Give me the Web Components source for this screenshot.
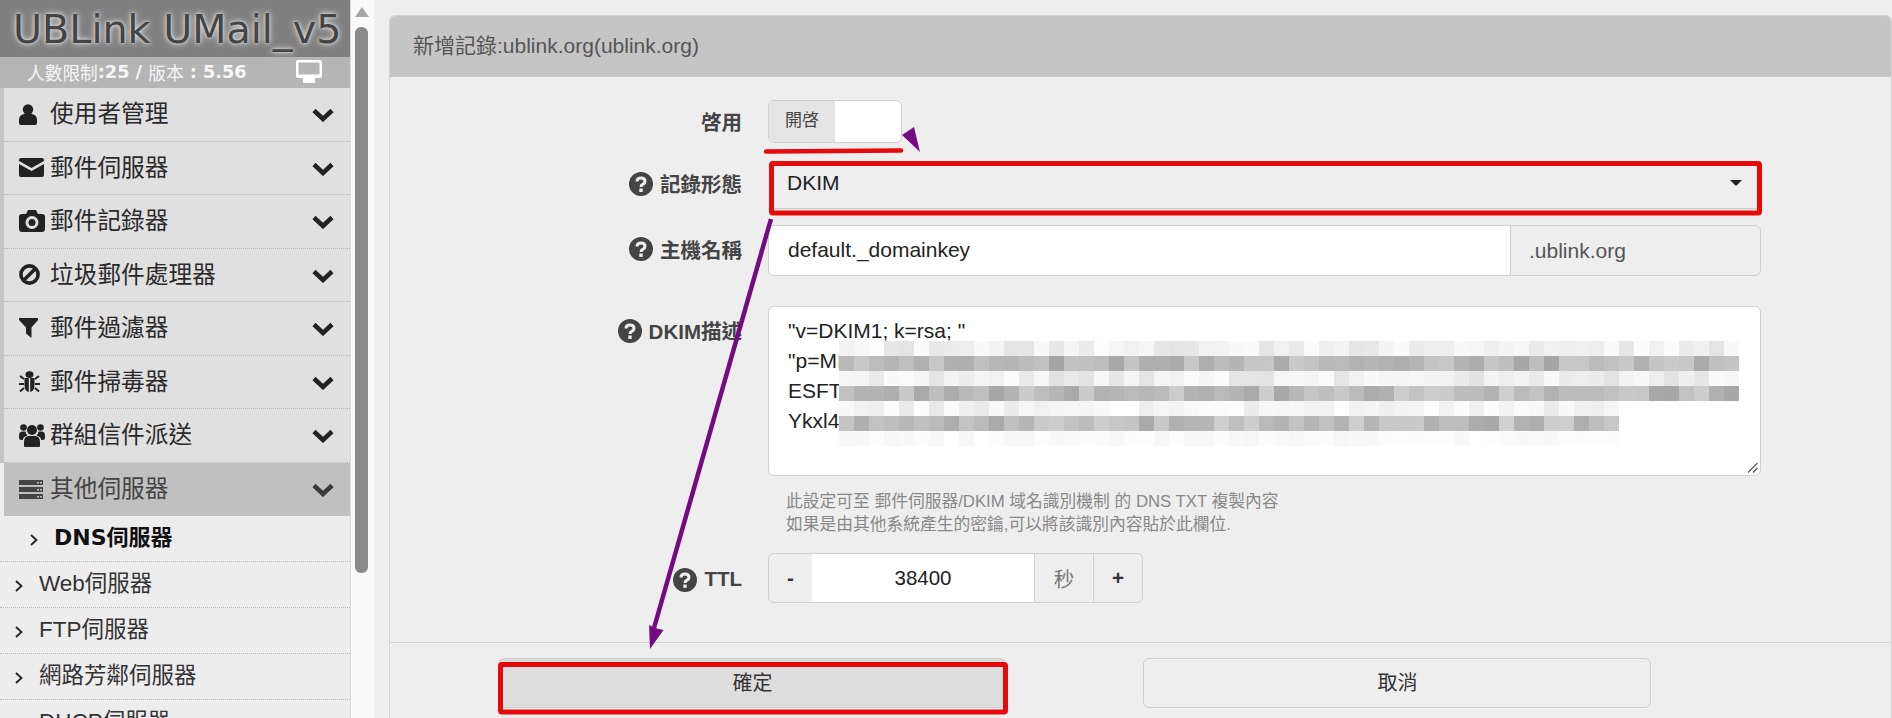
<!DOCTYPE html>
<html lang="zh-Hant">
<head>
<meta charset="utf-8">
<title>UBLink UMail</title>
<style>
  html, body { margin: 0; height: 718px; overflow: hidden; }
  body {
    display: flex;
    background: #eeeeee;
    font-family: "Liberation Sans", "Noto Sans CJK TC", sans-serif;
    color: #222;
    position: relative;
  }
</style>
</head>
<body>
  <side-nav>
    <menu-item icon="user">使用者管理</menu-item>
    <menu-item icon="envelope">郵件伺服器</menu-item>
    <menu-item icon="camera">郵件記錄器</menu-item>
    <menu-item icon="ban">垃圾郵件處理器</menu-item>
    <menu-item icon="filter">郵件過濾器</menu-item>
    <menu-item icon="bug">郵件掃毒器</menu-item>
    <menu-item icon="group">群組信件派送</menu-item>
    <menu-item icon="server" active>其他伺服器</menu-item>
    <sub-item current>DNS伺服器</sub-item>
    <sub-item>Web伺服器</sub-item>
    <sub-item>FTP伺服器</sub-item>
    <sub-item>網路芳鄰伺服器</sub-item>
    <sub-item>DHCP伺服器</sub-item>
  </side-nav>

  <record-panel heading="新增記錄:ublink.org(ublink.org)">
    <form-row label="啓用" gap="0"><switch-field></switch-field></form-row>
    <form-row label="記錄形態" help gap="15"><select-field>DKIM</select-field></form-row>
    <form-row label="主機名稱" help lift gap="16"><host-field suffix=".ublink.org">default._domainkey</host-field></form-row>
    <form-row label="DKIM描述" help top gap="30">
      <dkim-field>"v=DKIM1; k=rsa; "
"p=MI
ESFT
Ykxl4</dkim-field>
    </form-row>
    <form-row gap="14">
      <field-hint>此設定可至 郵件伺服器/DKIM 域名識別機制 的 DNS TXT 複製內容<br>如果是由其他系統產生的密鑰,可以將該識別內容貼於此欄位.</field-hint>
    </form-row>
    <form-row label="TTL" help drop gap="17"><ttl-field unit="秒">38400</ttl-field></form-row>
    <panel-button slot="footer" primary>確定</panel-button>
    <panel-button slot="footer">取消</panel-button>
  </record-panel>

  <page-annotations></page-annotations>

<script>
const ICONS = {
    user: '<svg width="18" height="21" viewBox="0 0 18 21"><circle cx="9" cy="5.5" r="5.2"/><path d="M2 21q-2 0-2-2v-3q0-5 5-6h8q5 1 5 6v3q0 2-2 2z"/></svg>',
    envelope: '<svg width="25" height="19" viewBox="0 0 25 19"><path d="M2 0h21q2 0 2 2v1L12.500 10 0 3V2q0-2 2-2zM0 6l12.500 7L25 6v11q0 2-2 2H2q-2 0-2-2z"/></svg>',
    camera: '<svg width="26" height="22" viewBox="0 0 26 22"><path d="M9 0h8l2 4h4q3 0 3 3v12q0 3-3 3H3q-3 0-3-3V7q0-3 3-3h4z"/><circle cx="13" cy="12.500" r="6.500" fill="#e0e0e0"/><circle cx="13" cy="12.500" r="3.500"/></svg>',
    ban: '<svg width="21" height="21" viewBox="0 0 21 21"><circle cx="10.500" cy="10.500" r="8.600" fill="none" stroke="currentColor" stroke-width="3.600"/><path d="M5 16L16 5" stroke="currentColor" stroke-width="3.600"/></svg>',
    filter: '<svg width="19" height="20" viewBox="0 0 19 20"><path d="M0 0h19v2l-6.500 7.500V20L7 15.500v-6L0 2z"/></svg>',
    bug: '<svg width="21" height="21" viewBox="0 0 21 21"><ellipse cx="10.500" cy="3.600" rx="4" ry="3.400"/><path d="M5.500 7h4.300v14Q5.500 20 5.500 14zM15.500 7h-4.300v14q4.300-1 4.300-7z"/><path d="M5 8L1 5M5 13H0M5 17l-4 3.500M16 8l4-3M16 13h5M16 17l4 3.500" stroke="currentColor" stroke-width="2" fill="none"/></svg>',
    group: '<svg width="26" height="24" viewBox="0 0 26 24"><circle cx="13" cy="7" r="5"/><path d="M6 24q-1 0-1-1v-4q0-5 4-6h8q4 1 4 6v4q0 1-1 1z"/><circle cx="4.500" cy="4.500" r="3.300"/><circle cx="21.500" cy="4.500" r="3.300"/><path d="M0 15v-3q0-3 3-3.500h3.500q.5 3 2 4Q4 13.500 3.800 17 0 17 0 15zM26 15v-3q0-3-3-3.500h-3.500q-.5 3-2 4 4.500 1 4.700 4.500 3.800 0 3.800-2z"/></svg>',
    server: '<svg width="24" height="19" viewBox="0 0 24 19"><path d="M0 0h24v5H0zM0 7h24v5H0zM0 14h24v5H0z"/><path d="M18 2h2v1.500h-2zM21 2h2v1.500h-2zM18 9h2v1.500h-2zM21 9h2v1.500h-2zM18 16h2v1.500h-2zM21 16h2v1.500h-2z" fill="#c0c0c0"/></svg>'
};

const sideNavTemplate = document.createElement('template');
sideNavTemplate.innerHTML = `
  <style>
    :host {
      display: flex;
      flex: none;
      width: 374px;
      height: 718px;
      overflow: hidden;
      background: #fafafa;
    }
    .column {
      width: 350px;
      flex: none;
      border-right: 1px solid #dcdcdc;
      background: #ededed;
    }
    .brand {
      height: 57px;
      background: #7f7f7f;
      color: #444;
      font: 39.700px/59px "DejaVu Sans", sans-serif;
      padding-left: 13px;
      white-space: nowrap;
      overflow: hidden;
      text-shadow: 0 0 6px #eee, 0 0 3px #ddd;
    }
    .info {
      height: 31px;
      box-sizing: border-box;
      padding: 0 0 2px 27px;
      background: #b5b5b5;
      color: #f6f6f6;
      display: flex;
      align-items: center;
      font: 17.700px "DejaVu Sans", "Noto Sans CJK TC", sans-serif;
      white-space: pre;
    }
    .info b { font-family: "DejaVu Sans", sans-serif; }
    .info svg { margin-left: 49px; }
    .track {
      flex: 1;
      display: flex;
      flex-direction: column;
      align-items: center;
      padding-right: 2px;
    }
    .arrow {
      margin-top: 7px;
      width: 0;
      height: 0;
      border: 7.500px solid transparent;
      border-top: 0;
      border-bottom: 10px solid #a6a6a6;
    }
    .thumb {
      margin-top: 10px;
      width: 13px;
      height: 546px;
      border-radius: 6px;
      background: #8a8a8a;
    }
  </style>
  <div class="column">
    <div class="brand">UBLink UMail_v5</div>
    <div class="info">人數限制<b>:25 / </b>版本<b> : 5.56</b><svg width="26" height="23" viewBox="0 0 26 23"><path fill="#fff" fill-rule="evenodd" d="M2 0h22q2 0 2 2v14q0 2-2 2h-5v2h-12v-2H2q-2 0-2-2V2q0-2 2-2zM2.500 2.500v12h21v-12z"/><path fill="#fff" d="M7 20h12v3H7z"/></svg></div>
    <slot></slot>
  </div>
  <div class="track"><div class="arrow"></div><div class="thumb"></div></div>
`;

class SideNav extends HTMLElement {
    constructor() {
        super();
        this.attachShadow({mode: 'open'});
        this.shadowRoot.appendChild(sideNavTemplate.content.cloneNode(true));
    }
}

class MenuItem extends HTMLElement {
    constructor() {
        super();
        this.attachShadow({mode: 'open'});
    }

    connectedCallback() {
        const icon = ICONS[this.getAttribute('icon')] || '';
        this.shadowRoot.innerHTML = `
          <style>
            :host {
              display: block;
              height: 53.500px;
              border-left: 4px solid #c6c6c6;
              box-sizing: border-box;
              color: #2a2a2a;
              background: #e0e0e0;
              font-size: 23.700px;
            }
            :host([active]) {
              background: #c0c0c0;
              border-left-color: #ededed;
              color: #444;
            }
            .row {
              display: flex;
              align-items: center;
              height: 100%;
              box-sizing: border-box;
              padding: 0 16px 0 15px;
              border-bottom: 1px dotted #b8b8b8;
            }
            :host([active]) .row { border-bottom: 0; }
            .icon { width: 31px; flex: none; display: flex; fill: currentColor; color: #222; }
            :host([active]) .icon { color: #444; }
            .text { flex: 1; white-space: nowrap; padding-bottom: 4px; }
            .chevron { fill: none; stroke: currentColor; stroke-width: 4.500px; color: #222; margin-top: 2px; }
            :host([active]) .chevron { color: #3a3a3a; }
          </style>
          <div class="row">
            <span class="icon">${icon}</span>
            <span class="text"><slot></slot></span>
            <svg class="chevron" width="22" height="14" viewBox="0 0 22 14"><path d="M2 2.500l9 8.500 9-8.500"/></svg>
          </div>
        `;
    }
}

const subItemTemplate = document.createElement('template');
subItemTemplate.innerHTML = `
  <style>
    :host {
      display: flex;
      align-items: center;
      height: 46px;
      box-sizing: border-box;
      padding-left: 15px;
      border-bottom: 1px dotted #b8b8b8;
      font-size: 22.500px;
      color: #333;
      white-space: nowrap;
    }
    :host([current]) {
      padding-left: 30px;
      font: bold 22px "DejaVu Sans", "Noto Sans CJK TC", sans-serif;
      color: #111;
    }
    .text { padding-bottom: 7px; }
    svg { width: 8px; height: 12px; flex: none; margin-right: 16px; margin-top: 3px; fill: none; stroke: #222; stroke-width: 1.800px; }
  </style>
  <svg viewBox="0 0 8 12"><path d="M1 1l5.500 5L1 11"/></svg>
  <span class="text"><slot></slot></span>
`;

class SubItem extends HTMLElement {
    constructor() {
        super();
        this.attachShadow({mode: 'open'});
        this.shadowRoot.appendChild(subItemTemplate.content.cloneNode(true));
    }
}

const panelTemplate = document.createElement('template');
panelTemplate.innerHTML = `
  <style>
    :host {
      display: block;
      flex: none;
      width: 1503px;
      height: 703px;
      margin: 15px 0 0 15px;
      box-sizing: border-box;
      border: 1px solid #d2d2d2;
      border-bottom: 0;
      border-radius: 6px 6px 0 0;
      background: #eeeeee;
      overflow: hidden;
    }
    header {
      height: 61px;
      line-height: 60px;
      padding-left: 23px;
      background: #c5c5c5;
      border-radius: 5px 5px 0 0;
      font-size: 21px;
      color: #555;
    }
    .body {
      height: 566px;
      box-sizing: border-box;
      padding-top: 23px;
      border-bottom: 1px solid #d2d2d2;
    }
    footer {
      display: flex;
      gap: 137px;
      padding: 15px 0 0 108px;
    }
  </style>
  <header></header>
  <div class="body"><slot></slot></div>
  <footer><slot name="footer"></slot></footer>
`;

class RecordPanel extends HTMLElement {
    constructor() {
        super();
        this.attachShadow({mode: 'open'});
        this.shadowRoot.appendChild(panelTemplate.content.cloneNode(true));
    }

    connectedCallback() {
        this.shadowRoot.querySelector('header').textContent = this.getAttribute('heading');
    }
}

class FormRow extends HTMLElement {
    constructor() {
        super();
        this.attachShadow({mode: 'open'});
    }

    connectedCallback() {
        const label = this.getAttribute('label');
        const help = this.hasAttribute('help') ? `
          <svg width="24" height="24" viewBox="0 0 24 24"><circle cx="12" cy="12" r="12" fill="#444"/><path d="M8 9.500q0-3.500 4-3.500t4 3.200q0 2-2 3-2 1-2 2.800" fill="none" stroke="#eee" stroke-width="3"/><path d="M10.300 16.500h3.400v3.400h-3.400z" fill="#eee"/></svg>` : '';
        this.shadowRoot.innerHTML = `
          <style>
            :host {
              display: grid;
              grid-template-columns: 352px 993px;
              column-gap: 26px;
              align-items: center;
              margin-top: ${this.getAttribute('gap') || 0}px;
            }
            :host([top]) { align-items: start; }
            .label {
              display: flex;
              justify-content: flex-end;
              align-items: center;
              gap: 7px;
              font-size: 20.500px;
              font-weight: bold;
              color: #444;
            }
            .label span { padding-bottom: 1px; }
            :host([top]) .label { padding-top: 9px; }
            :host([lift]) .label { padding-bottom: 3px; }
            :host([drop]) .label { padding-top: 3px; }
          </style>
          <div class="label">${help}<span>${label || ''}</span></div>
          <div><slot></slot></div>
        `;
    }
}

const switchTemplate = document.createElement('template');
switchTemplate.innerHTML = `
  <style>
    :host {
      display: flex;
      width: 134px;
      height: 43px;
      box-sizing: border-box;
      border: 1px solid #d0d0d0;
      border-radius: 6px;
      background: #fff;
      overflow: hidden;
    }
    span {
      width: 66px;
      box-sizing: border-box;
      padding: 5px 0 0 16px;
      background: #e4e4e4;
      font-size: 17px;
      color: #444;
    }
  </style>
  <span>開啓</span>
`;

class SwitchField extends HTMLElement {
    constructor() {
        super();
        this.attachShadow({mode: 'open'});
        this.shadowRoot.appendChild(switchTemplate.content.cloneNode(true));
    }
}

const selectTemplate = document.createElement('template');
selectTemplate.innerHTML = `
  <style>
    :host {
      display: flex;
      align-items: center;
      height: 51px;
      box-sizing: border-box;
      padding: 0 19px 0 19px;
      border-bottom: 1px solid #c8c8c8;
      font-size: 21px;
      color: #222;
    }
    .value { flex: 1; }
    i { width: 0; height: 0; border: 6px solid transparent; border-bottom: 0; border-top: 6px solid #222; }
  </style>
  <span class="value"><slot></slot></span><i></i>
`;

class SelectField extends HTMLElement {
    constructor() {
        super();
        this.attachShadow({mode: 'open'});
        this.shadowRoot.appendChild(selectTemplate.content.cloneNode(true));
    }
}

const hostTemplate = document.createElement('template');
hostTemplate.innerHTML = `
  <style>
    :host {
      display: flex;
      height: 51px;
      box-sizing: border-box;
      border: 1px solid #d0d0d0;
      border-radius: 6px;
      font-size: 21px;
      overflow: hidden;
    }
    .value {
      width: 742px;
      box-sizing: border-box;
      display: flex;
      align-items: center;
      padding: 0 0 2px 19px;
      background: #fff;
      border-right: 1px solid #d0d0d0;
      color: #222;
    }
    .suffix {
      flex: 1;
      display: flex;
      align-items: center;
      padding-left: 18px;
      color: #555;
    }
  </style>
  <span class="value"><slot></slot></span><span class="suffix"></span>
`;

class HostField extends HTMLElement {
    constructor() {
        super();
        this.attachShadow({mode: 'open'});
        this.shadowRoot.appendChild(hostTemplate.content.cloneNode(true));
    }

    connectedCallback() {
        this.shadowRoot.querySelector('.suffix').textContent = this.getAttribute('suffix');
    }
}

const dkimTemplate = document.createElement('template');
dkimTemplate.innerHTML = `
  <style>
    :host {
      display: block;
      position: relative;
      height: 170px;
      box-sizing: border-box;
      padding: 9px 19px;
      border: 1px solid #d0d0d0;
      border-radius: 6px;
      background: #fff;
      font-size: 21px;
      line-height: 30px;
      color: #222;
    }
    .text { white-space: pre; }
    /* the blurred key is a mosaic laid over the text */
    .mosaic { position: absolute; left: 70px; top: 34px; shape-rendering: crispEdges; }
    .grip { position: absolute; right: 2px; bottom: 2px; fill: none; stroke: #555; stroke-width: 1.200px; }
  </style>
  <div class="text"><slot></slot></div>
  <svg class="mosaic" width="904" height="105" viewBox="0 0 904 105"></svg>
  <svg class="grip" width="11" height="11" viewBox="0 0 11 11"><path d="M1 10.500L10.500 1M6 10.500l4.500-4.500"/></svg>
`;

class DkimField extends HTMLElement {
    constructor() {
        super();
        this.attachShadow({mode: 'open'});
        this.shadowRoot.appendChild(dkimTemplate.content.cloneNode(true));
    }

    connectedCallback() {
        let seed = 4711;
        const next = () => {
            seed = (seed * 1103515245 + 12345) & 0x7fffffff;
            return (seed >> 8) % 1000 / 1000;
        };
        const bands = [[226, 254], [164, 204], [226, 254], [166, 206], [232, 254], [168, 208], [246, 254]];
        let rects = '';
        bands.forEach(([low, high], row) => {
            const cols = row < 4 ? 60 : 52;
            for (let col = 0; col < cols; col++) {
                const v = Math.round(low + (high - low) * next());
                rects += `<rect x="${col * 15}" y="${row * 15}" width="15" height="15" fill="rgb(${v},${v},${v})"/>`;
            }
        });
        this.shadowRoot.querySelector('.mosaic').innerHTML = rects;
    }
}

const hintTemplate = document.createElement('template');
hintTemplate.innerHTML = `
  <style>
    :host {
      display: block;
      padding-left: 18px;
      font-size: 16.750px;
      line-height: 23px;
      color: #888;
      white-space: nowrap;
    }
  </style>
  <slot></slot>
`;

class FieldHint extends HTMLElement {
    constructor() {
        super();
        this.attachShadow({mode: 'open'});
        this.shadowRoot.appendChild(hintTemplate.content.cloneNode(true));
    }
}

const ttlTemplate = document.createElement('template');
ttlTemplate.innerHTML = `
  <style>
    :host {
      display: flex;
      width: 375px;
      height: 50px;
      box-sizing: border-box;
      border: 1px solid #d0d0d0;
      border-radius: 6px;
      font-size: 20.500px;
    }
    div { display: flex; align-items: center; justify-content: center; box-sizing: border-box; }
    .step { width: 43px; font-weight: bold; color: #333; }
    .plus { flex: 1; border-left: 1px solid #d0d0d0; }
    .value { width: 223px; margin-top: -1px; margin-bottom: -1px; background: #fff; border: 1px solid #d0d0d0; border-width: 1px 1px 1px 0; color: #222; }
    .unit { width: 58px; margin-top: -1px; margin-bottom: -1px; border-top: 1px solid #d0d0d0; border-bottom: 1px solid #d0d0d0; color: #777; }
  </style>
  <div class="step">-</div>
  <div class="value"><slot></slot></div>
  <div class="unit"></div>
  <div class="step plus">+</div>
`;

class TtlField extends HTMLElement {
    constructor() {
        super();
        this.attachShadow({mode: 'open'});
        this.shadowRoot.appendChild(ttlTemplate.content.cloneNode(true));
    }

    connectedCallback() {
        this.shadowRoot.querySelector('.unit').textContent = this.getAttribute('unit');
    }
}

const buttonTemplate = document.createElement('template');
buttonTemplate.innerHTML = `
  <style>
    :host {
      display: flex;
      align-items: center;
      justify-content: center;
      width: 508px;
      height: 50px;
      box-sizing: border-box;
      padding: 0 0 4px 1px;
      border: 1px solid #d0d0d0;
      border-radius: 6px;
      font-size: 20px;
      color: #333;
    }
    :host([primary]) { background: #dddddd; }
  </style>
  <slot></slot>
`;

class PanelButton extends HTMLElement {
    constructor() {
        super();
        this.attachShadow({mode: 'open'});
        this.shadowRoot.appendChild(buttonTemplate.content.cloneNode(true));
    }
}

const annotationTemplate = document.createElement('template');
annotationTemplate.innerHTML = `
  <style>
    :host { position: absolute; left: 0; top: 0; width: 1892px; height: 718px; pointer-events: none; }
    svg { display: block; }
  </style>
  <svg width="1892" height="718" viewBox="0 0 1892 718" fill="none">
    <rect x="771.500" y="163.500" width="988" height="49.500" rx="1.500" stroke="#e60a0a" stroke-width="5"/>
    <rect x="500.500" y="664.500" width="505" height="47.500" rx="1.500" stroke="#e60a0a" stroke-width="5"/>
    <path d="M766 151.500L901 150.500" stroke="#e60a0a" stroke-width="4.500" stroke-linecap="round"/>
    <path d="M902 135L914 127L920 152Z" fill="#760a80"/>
    <path d="M771 219L654 628" stroke="#760a80" stroke-width="4.500"/>
    <path d="M650 649L649 625L655 628L663.500 630Z" fill="#760a80"/>
  </svg>
`;

class PageAnnotations extends HTMLElement {
    constructor() {
        super();
        this.attachShadow({mode: 'open'});
        this.shadowRoot.appendChild(annotationTemplate.content.cloneNode(true));
    }
}

window.customElements.define('side-nav', SideNav);
window.customElements.define('menu-item', MenuItem);
window.customElements.define('sub-item', SubItem);
window.customElements.define('record-panel', RecordPanel);
window.customElements.define('form-row', FormRow);
window.customElements.define('switch-field', SwitchField);
window.customElements.define('select-field', SelectField);
window.customElements.define('host-field', HostField);
window.customElements.define('dkim-field', DkimField);
window.customElements.define('field-hint', FieldHint);
window.customElements.define('ttl-field', TtlField);
window.customElements.define('panel-button', PanelButton);
window.customElements.define('page-annotations', PageAnnotations);
</script>
</body>
</html>
